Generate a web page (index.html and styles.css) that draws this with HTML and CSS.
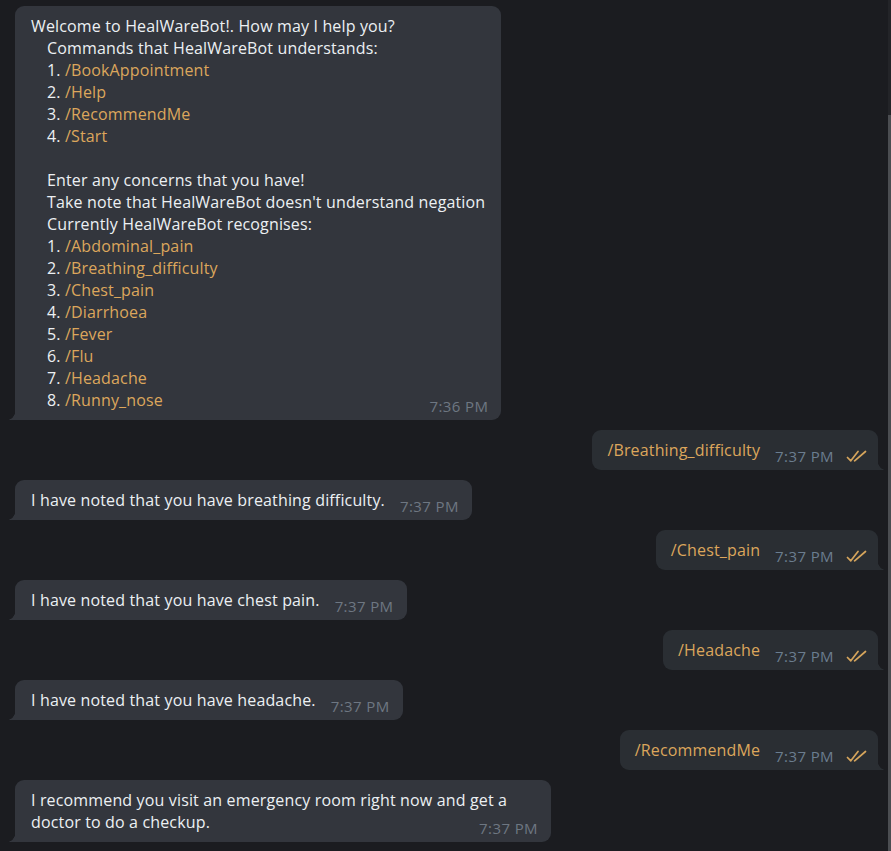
FILE: index.html
```html
<!DOCTYPE html>
<html lang="en">
<head>
<meta charset="utf-8">
<title>HealWareBot</title>
<link rel="stylesheet" href="styles.css">
</head>
<body>
<div class="window">
  <main class="chat">
    <div class="row in">
      <div class="bubble">
        Welcome to HealWareBot!. How may I help you?<br>
        <span class="ind">Commands that HealWareBot understands:</span><br>
        <span class="ind">1. <span class="cmd">/BookAppointment</span></span><br>
        <span class="ind">2. <span class="cmd">/Help</span></span><br>
        <span class="ind">3. <span class="cmd">/RecommendMe</span></span><br>
        <span class="ind">4. <span class="cmd">/Start</span></span><br>
        <br>
        <span class="ind">Enter any concerns that you have!</span><br>
        <span class="ind">Take note that HealWareBot doesn't understand negation</span><br>
        <span class="ind">Currently HealWareBot recognises:</span><br>
        <span class="ind">1. <span class="cmd">/Abdominal_pain</span></span><br>
        <span class="ind">2. <span class="cmd">/Breathing_difficulty</span></span><br>
        <span class="ind">3. <span class="cmd">/Chest_pain</span></span><br>
        <span class="ind">4. <span class="cmd">/Diarrhoea</span></span><br>
        <span class="ind">5. <span class="cmd">/Fever</span></span><br>
        <span class="ind">6. <span class="cmd">/Flu</span></span><br>
        <span class="ind">7. <span class="cmd">/Headache</span></span><br>
        <span class="ind">8. <span class="cmd">/Runny_nose</span></span><span class="meta"><span class="time">7:36 PM</span></span>
      </div>
    </div>

    <div class="row out">
      <div class="bubble">
        <span class="cmd">/Breathing_difficulty</span><span class="meta"><span class="time">7:37 PM</span><svg class="check" viewBox="0 0 21 12" width="21" height="12"><path d="M1.5 7.5 L4.8 10.8 L12 1.5 M8.6 10.8 L19.5 1.5" /></svg></span>
      </div>
    </div>

    <div class="row in">
      <div class="bubble">
        I have noted that you have breathing difficulty.<span class="meta"><span class="time">7:37 PM</span></span>
      </div>
    </div>

    <div class="row out">
      <div class="bubble">
        <span class="cmd">/Chest_pain</span><span class="meta"><span class="time">7:37 PM</span><svg class="check" viewBox="0 0 21 12" width="21" height="12"><path d="M1.5 7.5 L4.8 10.8 L12 1.5 M8.6 10.8 L19.5 1.5" /></svg></span>
      </div>
    </div>

    <div class="row in">
      <div class="bubble">
        I have noted that you have chest pain.<span class="meta"><span class="time">7:37 PM</span></span>
      </div>
    </div>

    <div class="row out">
      <div class="bubble">
        <span class="cmd">/Headache</span><span class="meta"><span class="time">7:37 PM</span><svg class="check" viewBox="0 0 21 12" width="21" height="12"><path d="M1.5 7.5 L4.8 10.8 L12 1.5 M8.6 10.8 L19.5 1.5" /></svg></span>
      </div>
    </div>

    <div class="row in">
      <div class="bubble">
        I have noted that you have headache.<span class="meta"><span class="time">7:37 PM</span></span>
      </div>
    </div>

    <div class="row out">
      <div class="bubble">
        <span class="cmd">/RecommendMe</span><span class="meta"><span class="time">7:37 PM</span><svg class="check" viewBox="0 0 21 12" width="21" height="12"><path d="M1.5 7.5 L4.8 10.8 L12 1.5 M8.6 10.8 L19.5 1.5" /></svg></span>
      </div>
    </div>

    <div class="row in">
      <div class="bubble wide">
        I recommend you visit an emergency room right now and get a<br>doctor to do a checkup.<span class="meta"><span class="time">7:37 PM</span></span>
      </div>
    </div>
  </main>
  <div class="scrollbar">
    <div class="track"></div>
    <div class="thumb"></div>
  </div>
</div>
</body>
</html>
```

FILE: styles.css
```css
* {
  box-sizing: border-box;
}

html, body {
  margin: 0;
  padding: 0;
  height: 100%;
  background: #1b1c20;
}

body {
  font-family: "Open Sans", "Noto Sans", sans-serif;
  font-size: 16px;
  letter-spacing: 0.15px;
  color: #ecf0f3;
  overflow: hidden;
}

.window {
  display: flex;
  height: 851px;
}

.chat {
  flex: 1;
  display: flex;
  flex-direction: column;
  gap: 10px;
  padding: 6px 10px 0 15px;
}

.row {
  display: flex;
}

.row.in {
  justify-content: flex-start;
}

.row.out {
  justify-content: flex-end;
}

.bubble {
  position: relative;
  display: flow-root;
  padding: 9px 16px 6px 16px;
  line-height: 22px;
  border-radius: 9px;
  white-space: nowrap;
}

.row.in .bubble {
  background: #33363d;
  border-bottom-left-radius: 0;
}

.row.out .bubble {
  background: #2a2e33;
  border-bottom-right-radius: 0;
  padding-left: 15px;
  padding-right: 11px;
}

.bubble::before {
  content: "";
  position: absolute;
  bottom: 0;
  width: 8px;
  height: 12px;
}

.row.in .bubble::before {
  left: -7px;
  background: radial-gradient(ellipse 8px 12px at 0 0, transparent 96%, #33363d 100%);
}

.row.out .bubble::before {
  right: -7px;
  background: radial-gradient(ellipse 8px 12px at 100% 0, transparent 96%, #2a2e33 100%);
}

.bubble.wide {
  width: 536px;
}

.ind {
  padding-left: 16px;
}

.cmd {
  color: #dca65c;
}

.meta {
  float: right;
  display: flex;
  align-items: center;
  gap: 12px;
  margin: 9px -3px 0 15px;
  height: 16px;
  line-height: 16px;
  font-size: 15px;
  letter-spacing: 0.4px;
}

.row.out .meta {
  margin-right: 0;
}

.time {
  color: #6e7782;
}

.row.out .time {
  color: #6b7d8f;
}

.check {
  display: block;
  fill: none;
  stroke: #d6a55c;
  stroke-width: 1.7;
  stroke-linecap: round;
  stroke-linejoin: round;
}

.scrollbar {
  width: 3px;
  display: flex;
  flex-direction: column;
}

.track {
  height: 115px;
  background: #232428;
}

.thumb {
  flex: 1;
  background: #4b4d51;
}
```
